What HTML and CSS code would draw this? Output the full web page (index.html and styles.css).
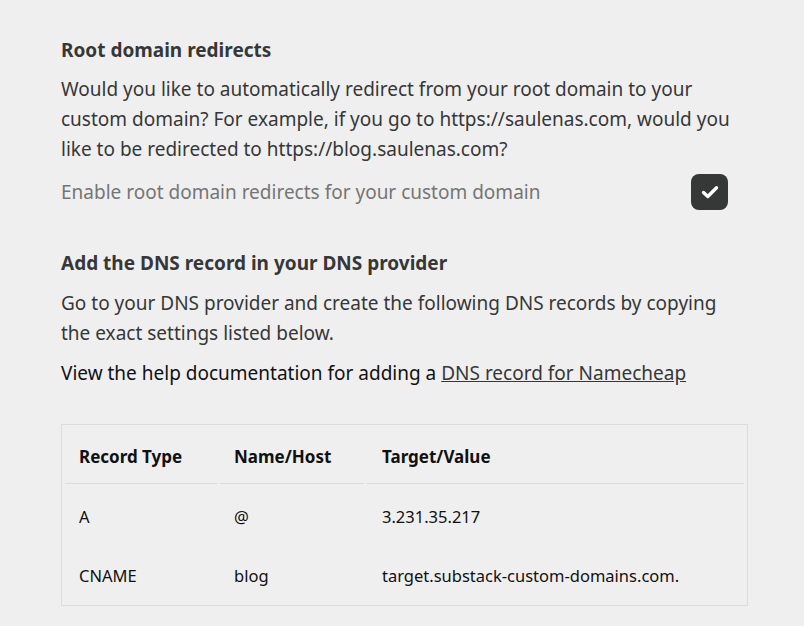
FILE: index.html
```html
<!DOCTYPE html>
<html lang="en">
<head>
    <meta charset="UTF-8">
    <meta name="viewport" content="width=device-width, initial-scale=1.0">
    <title>Custom domain</title>
    <link rel="stylesheet" href="styles.css">
</head>
<body>
    <div class="container">
        <section class="section">
            <h2>Root domain redirects</h2>
            <p>Would you like to automatically redirect from your root domain to your custom domain? For example, if you go to https://saulenas.com, would you like to be redirected to https://blog.saulenas.com?</p>
            <label class="toggle-row">
                <span class="toggle-label">Enable root domain redirects for your custom domain</span>
                <span class="checkbox">
                    <svg width="18" height="14" viewBox="0 0 18 14"><path d="M2.5 7.5 L6.8 11.5 L15.5 2.8" fill="none" stroke="#fff" stroke-width="3.4" stroke-linecap="round" stroke-linejoin="round"/></svg>
                </span>
            </label>
        </section>

        <section class="section dns">
            <h2>Add the DNS record in your DNS provider</h2>
            <p>Go to your DNS provider and create the following DNS records by copying the exact settings listed below.</p>
            <p class="help">View the help documentation for adding a <a href="#">DNS record for Namecheap</a></p>
        </section>

        <table class="dns-table">
            <thead>
                <tr>
                    <th class="col-type">Record Type</th>
                    <th class="col-name">Name/Host</th>
                    <th>Target/Value</th>
                </tr>
            </thead>
            <tbody>
                <tr>
                    <td>A</td>
                    <td>@</td>
                    <td>3.231.35.217</td>
                </tr>
                <tr>
                    <td>CNAME</td>
                    <td>blog</td>
                    <td>target.substack-custom-domains.com.</td>
                </tr>
            </tbody>
        </table>
    </div>
</body>
</html>
```

FILE: styles.css
```css
body {
    margin: 0;
    background-color: #efefef;
    font-family: 'Noto Sans', sans-serif;
    color: #363737;
}

.container {
    padding: 37px 57px 20px 61px;
}

h2 {
    font-size: 19px;
    font-weight: 700;
    margin: 0 0 11px 0;
    line-height: 26px;
}

p {
    font-size: 19px;
    line-height: 30px;
    margin: 0 0 10px 0;
}

.section {
    margin-bottom: 40px;
}

.section.dns {
    margin-bottom: 36px;
}

.section.dns h2 {
    margin-bottom: 12px;
}

.toggle-row {
    display: flex;
    align-items: center;
    justify-content: space-between;
    margin-top: 6px;
    padding-right: 19px;
}

.toggle-label {
    font-size: 19px;
    color: #757575;
}

.checkbox {
    width: 37px;
    height: 36px;
    border-radius: 8px;
    background-color: #363737;
    display: flex;
    align-items: center;
    justify-content: center;
}

.help {
    color: #111;
}

.help a {
    color: #363737;
    text-decoration: underline;
}

.dns-table {
    width: 687px;
    border: 1px solid #dcdcdc;
    border-spacing: 3px 0;
    font-size: 17px;
    color: #111;
    text-align: left;
}

.dns-table th {
    font-weight: 700;
    padding: 20px 14px 15px;
    border-bottom: 1px solid #dcdcdc;
}

.dns-table .col-type {
    width: 124px;
}

.dns-table .col-name {
    width: 116px;
}

.dns-table th:last-child {
    padding-left: 15px;
}

.dns-table td {
    font-size: 16.5px;
    padding: 21px 14px 15px;
}

.dns-table td:last-child {
    padding-left: 15px;
}

.dns-table tbody tr:last-child td {
    padding-bottom: 18px;
}
```
